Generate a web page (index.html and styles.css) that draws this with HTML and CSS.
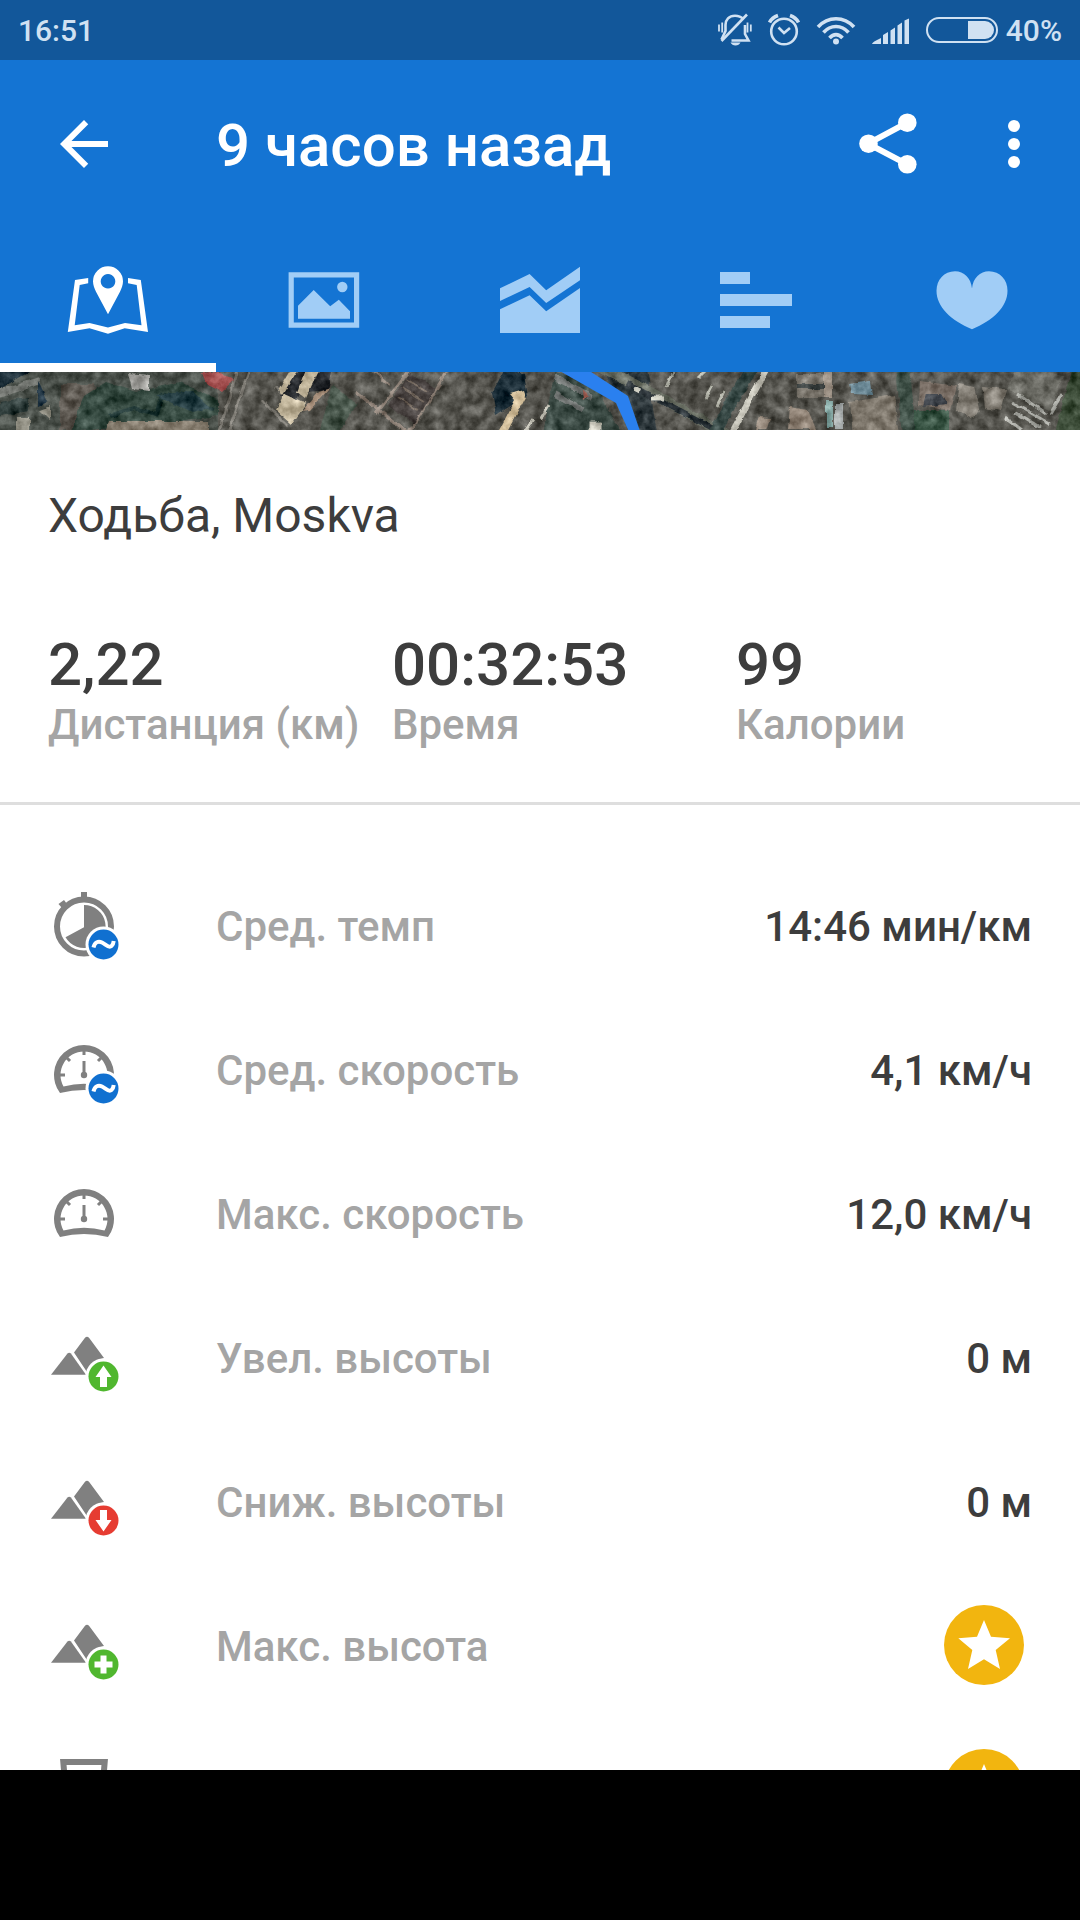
FILE: index.html
```html
<!DOCTYPE html>
<html lang="ru">
<head>
<meta charset="utf-8">
<meta name="viewport" content="width=device-width, initial-scale=1">
<title>9 часов назад</title>
<link rel="stylesheet" href="styles.css">
</head>
<body>
<svg class="defs" aria-hidden="true">
  <defs>
    <g id="badge-average">
      <circle cx="55.5" cy="54.5" r="18" fill="#fff"/>
      <circle cx="55.5" cy="54.5" r="15" fill="#1070d0"/>
      <path d="M45.500 57.500c1-5 4.500-7 8.500-5s6.500 6 9.500 3.500c1.500-1.300 2-3 2.200-5" fill="none" stroke="#fff" stroke-width="4"/>
    </g>
    <g id="gauge">
      <path fill-rule="evenodd" d="M12 59A30 30 0 1 1 60 59Q36 53 12 59zM15.500 52.500Q36 47 56.500 52.500A23.500 23.500 0 1 0 15.500 52.500z"/>
      <path d="M36 15v6M12 41h5M60 41h-5M17.500 22.500l4.500 4.500M54.500 22.500L50 27M36 27v14" fill="none" stroke="#808080" stroke-width="3"/>
      <circle cx="36" cy="41" r="3.200"/>
    </g>
    <g id="mountains">
      <path d="M26 30.500L37 15.700q2-2 4 0L56 36Q43 38 39 50z"/>
      <path d="M3 52.700L19.500 31.600q1.700-1.600 3.400 0L38 52.700z"/>
      <circle cx="55.500" cy="54.500" r="18" fill="#fff"/>
    </g>
    <g id="star">
      <circle cx="40" cy="40" r="40" fill="#f2b50f"/>
      <path d="M40 15L47 31.700 66 33.300 51.700 45 56 64 40 54.300 24 64 28.300 45 14.300 33.300 33 31.700z" fill="#fff"/>
    </g>
  </defs>
</svg>

<div class="statusbar">
  <span class="statusbar-text">16:51</span>
  <div class="statusbar-icons">
    <svg width="34" height="34" viewBox="0 0 34 34" fill="none" stroke="currentColor">
      <path d="M25 6C22.500 3 20 2.700 17 2.700c-6 0-9.500 4-9.500 9.300v6L3.500 26.500M13.500 27.500H30.500L27 21V12" stroke-width="2.600"/>
      <path d="M29 1.500L3.500 28" stroke-width="2.600"/>
      <path d="M1 11.500v7M4.200 9.500v10M29.500 9.500v10M32.800 11.500v7" stroke-width="1.800"/>
      <path d="M12.500 29.500h10q-1.500 3-5 3t-5-3z" fill="currentColor" stroke="none"/>
    </svg>
    <svg width="32" height="34" viewBox="0 0 32 34" fill="none" stroke="currentColor" stroke-width="2.600">
      <circle cx="16" cy="18.500" r="12.800"/>
      <path d="M10.500 14.500L16 20l6-5"/>
      <path d="M1.500 9.500Q4 4.500 10 2.500M30.500 9.500Q28 4.500 22 2.500" stroke-width="3.600"/>
    </svg>
    <svg width="40" height="34" viewBox="0 0 40 34" fill="none" stroke="currentColor" stroke-width="3.600">
      <path d="M2 14C12 3 28 3 38 14M7.500 19.500c7-8 18-8 25 0M13.500 25c4-4.500 9-4.500 13 0"/>
      <circle cx="20" cy="28.500" r="3" fill="currentColor" stroke="none"/>
    </svg>
    <svg width="38" height="34" viewBox="0 0 38 34" fill="currentColor">
      <path d="M0 31q0-2 9-6v6zM11 31V22l5-3v12zM18.500 31V17.500l4.500-3V31zM25.500 31V12.500l4.500-3V31zM32.500 31V7.500L37 5.500V31z"/>
    </svg>
    <svg width="72" height="34" viewBox="0 0 72 34">
      <rect x="1" y="5" width="70" height="24" rx="12" fill="none" stroke="currentColor" stroke-width="2"/>
      <path d="M42 8H59a9 9 0 0 1 0 18H42z" fill="currentColor"/>
    </svg>
  </div>
  <span class="statusbar-text">40%</span>
</div>

<header class="header">
  <div class="appbar">
    <button class="icon-button" type="button" aria-label="Назад">
      <svg width="72" height="72" viewBox="0 0 24 24" fill="currentColor"><path d="M20 11H7.830l5.590-5.590L12 4l-8 8 8 8 1.410-1.410L7.830 13H20v-2z"/></svg>
    </button>
    <h1 class="title">9 часов назад</h1>
    <div class="actions">
      <button class="icon-button" type="button" aria-label="Поделиться">
        <svg width="72" height="72" viewBox="0 0 72 72" fill="currentColor">
          <path d="M55.300 14.700L16 35.700l39.300 20.600" fill="none" stroke="currentColor" stroke-width="6"/>
          <circle cx="16.500" cy="35.700" r="9.300"/><circle cx="55.300" cy="14.700" r="9.300"/><circle cx="55.300" cy="56.300" r="9.300"/>
        </svg>
      </button>
      <button class="icon-button" type="button" aria-label="Ещё">
        <svg width="72" height="72" viewBox="0 0 72 72" fill="currentColor"><circle cx="36" cy="18" r="6"/><circle cx="36" cy="36" r="6"/><circle cx="36" cy="54" r="6"/></svg>
      </button>
    </div>
  </div>
  <nav class="tabs" role="tablist">
    <button class="tab tab-active" type="button" role="tab" aria-selected="true" aria-label="Карта">
      <svg width="96" height="96" viewBox="0 0 96 96" fill="currentColor">
        <path d="M15 28L28.200 26V31.300L19.700 33 14.700 73.300 29.500 71 48 75.500 65 71 81.500 73.300 76.700 33 68 31.300V26L80.800 28 88 80 64.700 76.300 48 81.700 29.500 76.300 7.800 80z"/>
        <path fill-rule="evenodd" d="M48 14.300a15 15 0 0 1 15 15c0 4-1.500 7-3 10.500L48 62.300 36 39.800c-1.500-3.500-3-6.500-3-10.500a15 15 0 0 1 15-15zM48 22a7.300 7.300 0 1 0 .010 0z"/>
      </svg>
    </button>
    <button class="tab" type="button" role="tab" aria-selected="false" aria-label="Фото">
      <svg width="96" height="96" viewBox="0 0 96 96" fill="currentColor">
        <path fill-rule="evenodd" d="M12.600 20.300H83.200V75.700H12.600zM17.800 25.500V70.500H78V25.500z"/>
        <path d="M22 53.700L37.700 38 54.200 54.300 62.800 47.700 74 59.300V66.700H22z"/><circle cx="66.300" cy="35" r="5.200"/>
      </svg>
    </button>
    <button class="tab" type="button" role="tab" aria-selected="false" aria-label="График">
      <svg width="96" height="96" viewBox="0 0 96 96" fill="currentColor">
        <path d="M8 36.300L37.600 22 54.200 38.300 88 14.700V28.300L54.200 51 37.600 35 8 49z"/>
        <path d="M8 57.300L37.600 43.300 54.200 59.300 88 36V81H8z"/>
      </svg>
    </button>
    <button class="tab" type="button" role="tab" aria-selected="false" aria-label="Круги">
      <svg width="96" height="96" viewBox="0 0 96 96" fill="currentColor"><path d="M12 20H42V32H12zM12 42H84V54H12zM12 64H62V76H12z"/></svg>
    </button>
    <button class="tab" type="button" role="tab" aria-selected="false" aria-label="Пульс">
      <svg width="96" height="96" viewBox="0 0 96 96" fill="currentColor"><path d="M48 36.500C49 26 56 19.300 65 19.300c11 0 18.500 8.500 18.500 19.500C83.500 55 69 68.500 48 77.300 27 68.500 12.500 55 12.500 38.800c0-11 7.500-19.500 18.500-19.500C40 19.300 47 26 48 36.500z"/></svg>
    </button>
  </nav>
</header>

<main class="content">
  <svg class="map" viewBox="0 0 1080 58" preserveAspectRatio="xMidYMid slice" role="img" aria-label="Карта маршрута">
    <defs>
      <filter id="ground" x="0" y="0" width="100%" height="100%" color-interpolation-filters="sRGB">
        <feTurbulence type="fractalNoise" baseFrequency="0.09" numOctaves="4" seed="8" result="noise"/>
        <feDisplacementMap in="SourceGraphic" in2="noise" scale="5" xChannelSelector="R" yChannelSelector="G" result="shape"/>
        <feGaussianBlur in="shape" stdDeviation="0.7" result="soft"/>
        <feColorMatrix in="noise" type="matrix" values="1 .3 0 0 -.150  1 .3 0 0 -.150  1 .3 0 0 -.150  0 0 0 0 1" result="grain"/>
        <feComposite in="soft" in2="grain" operator="arithmetic" k1="0" k2="1" k3=".45" k4="-.225"/>
      </filter>
    </defs>
    <g filter="url(#ground)">
      <rect x="-20" y="-20" width="1120" height="98" fill="#56554f"/>
      <path d="M-10-10H218V68H-10z" fill="#4d534d"/>
      <path d="M60 12h34l8 46H60z" fill="#5b564f"/>
      <path d="M84 24L106 10 136 20 180 10 218 28V44L150 52 70 60z" fill="#34483f"/>
      <path d="M110 44l24-8 22 6 6-20 52 16" fill="none" stroke="#1f3634" stroke-width="4"/>
      <path d="M-10-10H46L0 17z" fill="#142630"/>
      <path d="M0 17L40 5V12L0 26z" fill="#777a75"/>
      <path d="M38 8l10 22-10 4z" fill="#1c303e"/>
      <path d="M0 30l28-5v14L0 44z" fill="#33413f"/>
      <path d="M128 1l22 2 0 16-18-2z" fill="#a5a4a0"/>
      <path d="M108 49h100v12H104z" fill="#82796b"/>
      <path d="M16 46l14 0v14H16zM40 38l10-4v14z" fill="#918f83"/>
      <path d="M202 1l16-2 16 9-12 11-16-8z" fill="#a04d4d"/>
      <path d="M156 23l36-4 20 18-20 4z" fill="#253d42"/>
      <path d="M238-5l-20 68M250-5L228 63M262 28l26 26M275 15l20 20" stroke="#817e77" stroke-width="3"/>
      <path d="M292 0l-12 24 16 6 14-30zM316 0h16l-4 18-20 2z" fill="#24272b"/>
      <path d="M300-5l-18 28-4-4 14-24zM306-4L297 20 305 26 320-4zM284 22l18 8 4 2-14 20-16-14z" fill="#c2b69c"/>
      <path d="M318 20l12-4-20 22-8 1z" fill="#a58e7a"/>
      <path d="M332 12l25 20-20 30h-18z" fill="#48564b"/>
      <path d="M356 20l56 44M372-3l17 16M410-2l-34 44M448-2L408 62" stroke="#8b7f75" stroke-width="3"/>
      <path d="M410 1l26 15-22 36-26-19z" fill="#494341"/>
      <path d="M406 7l22 13M402 16l22 13M397 25l21 13" stroke="#74695f" stroke-width="2"/>
      <path d="M506-5l18 8 4 20-32 20-4-22z" fill="#182a34"/>
      <path d="M510 22l14-4 2 6L505 64h-9l19-36z" fill="#d1bd99"/>
      <path d="M555 0l40 12 26 50h-78l6-34z" fill="#3b4a44"/>
      <path d="M554 5l38 20M555 22l28 16" stroke="#6f7371" stroke-width="6"/>
      <path d="M582 18l6 5-5 5" fill="#a5675c"/>
      <path d="M540 48l9-15M525 60l8-12M591 51h9v10h-9z" stroke="#bebcb0" stroke-width="3" fill="#bebcb0"/>
      <path d="M600-10h46l12 78h-24z" fill="#343e42"/>
      <path d="M600-5l40 20 22 12 75 41" fill="none" stroke="#666b60" stroke-width="11"/>
      <path d="M628 12l112 58" stroke="#272f34" stroke-width="6"/>
      <path d="M634 16l6 3M652 26h12" stroke="#ccccc0" stroke-width="5"/>
      <path d="M674-4l-8 20M705 0l-6 6M712 14l-7 14M724 20l-7 14" stroke="#b4b5aa" stroke-width="3"/>
      <path d="M752-5L714 62" stroke="#354643" stroke-width="12"/>
      <path d="M768-6L730 64" stroke="#c7c5ba" stroke-width="6"/>
      <path d="M796 2h28v24h-28z" fill="#777269"/><path d="M796 12h28v5h-28z" fill="#3f4544"/>
      <path d="M824-3h8v29h-8z" fill="#998e82"/>
      <path d="M790 35l18 3 8 19h-28zM760 45l10 1-4 12h-10z" fill="#8c7f72"/>
      <path d="M826 29h7v26h-7z" fill="#83a5a1"/><path d="M835 31h8v26h-8z" fill="#a1a6a6"/>
      <path d="M850 12l20-3 2 14-20-1z" fill="#728f9c"/>
      <path d="M850 30l44-7 5 42h-46z" fill="#7d766b"/>
      <path d="M896-5h14l6 70h-14z" fill="#3f5047"/>
      <path d="M920 9l37 5-6 24-32-5z" fill="#7b7067"/><path d="M926 22l15 0 6 10-24 3z" fill="#40454c"/>
      <path d="M914 38h36v26h-36z" fill="#385343"/>
      <path d="M960 12l14 3 6 26-10 4-14-7zM982 15l24 2-6 22-16-3z" fill="#827d74"/>
      <path d="M1018-5l45 8-12 36-44-23z" fill="#686861"/>
      <path d="M1012 30l38 22M1014 40l26 16M1006 46l16 12M1018 22l28 20M1062 22l-12 20" stroke="#aaaba5" stroke-width="3"/>
      <path d="M1072-5h18v70h-36z" fill="#3f4f3b"/>
    </g>
    <path d="M558-2L616 31 630 62H641L628 24 588-2z" fill="#2a80ef"/>
  </svg>

  <section class="summary">
    <h2 class="activity">Ходьба, Moskva</h2>
    <dl class="stats">
      <div class="stat"><dt>Дистанция (км)</dt><dd>2,22</dd></div>
      <div class="stat"><dt>Время</dt><dd>00:32:53</dd></div>
      <div class="stat"><dt>Калории</dt><dd>99</dd></div>
    </dl>
  </section>

  <ul class="details">
    <li class="row">
      <svg class="row-icon" viewBox="0 0 72 72">
        <circle cx="36" cy="36.500" r="27" fill="none" stroke="#808080" stroke-width="6"/>
        <path d="M36 15A21.500 21.500 0 1 1 17.500 47.300L36 37.300zM33 2h6v7h-6zM10.500 14l5.500-4 3 4-5 4z"/>
        <use href="#badge-average"/>
      </svg>
      <span class="label">Сред. темп</span><span class="value">14:46 мин/км</span>
    </li>
    <li class="row">
      <svg class="row-icon" viewBox="0 0 72 72"><use href="#gauge"/><use href="#badge-average"/></svg>
      <span class="label">Сред. скорость</span><span class="value">4,1 км/ч</span>
    </li>
    <li class="row">
      <svg class="row-icon" viewBox="0 0 72 72"><use href="#gauge"/></svg>
      <span class="label">Макс. скорость</span><span class="value">12,0 км/ч</span>
    </li>
    <li class="row">
      <svg class="row-icon" viewBox="0 0 72 72"><use href="#mountains"/><circle cx="55.500" cy="54.500" r="15" fill="#50b72f"/><path d="M55.500 43.500l8 11.500h-4.500v10h-7V55h-4.500z" fill="#fff"/></svg>
      <span class="label">Увел. высоты</span><span class="value">0 м</span>
    </li>
    <li class="row">
      <svg class="row-icon" viewBox="0 0 72 72"><use href="#mountains"/><circle cx="55.500" cy="54.500" r="15" fill="#e63c32"/><path d="M55.500 65.500l8-11.500h-4.500V44h-7v10h-4.500z" fill="#fff"/></svg>
      <span class="label">Сниж. высоты</span><span class="value">0 м</span>
    </li>
    <li class="row">
      <svg class="row-icon" viewBox="0 0 72 72"><use href="#mountains"/><circle cx="55.500" cy="54.500" r="15" fill="#50b72f"/><path d="M52.500 45.500h6v6h6v6h-6v6h-6v-6h-6v-6h6z" fill="#fff"/></svg>
      <span class="label">Макс. высота</span>
      <svg class="premium" viewBox="0 0 80 80"><use href="#star"/></svg>
    </li>
    <li class="row">
      <svg class="row-icon" viewBox="0 0 72 72"><path d="M15.300 8H56.700L52 64H20z" fill="none" stroke="#808080" stroke-width="6"/></svg>
      <span class="label"></span>
      <svg class="premium" viewBox="0 0 80 80"><use href="#star"/></svg>
    </li>
  </ul>
</main>
<footer class="bottom-bar"></footer>
</body>
</html>
```
FILE: styles.css
```css
* {
  box-sizing: border-box;
}

body {
  margin: 0;
  height: 100vh;
  display: flex;
  flex-direction: column;
  overflow: hidden;
  background: #fff;
  color: #3d3d3d;
  font-family: Roboto, "Noto Sans", sans-serif;
  font-size: 42px;
  font-weight: 500;
  line-height: 48px;
}

h1, h2, dl, dd, ul {
  margin: 0;
  padding: 0;
}

button {
  display: flex;
  align-items: center;
  justify-content: center;
  padding: 0;
  border: 0;
  background: none;
  color: inherit;
}

svg {
  display: block;
  flex: none;
}

.defs {
  position: absolute;
  width: 0;
  height: 0;
}

.statusbar {
  display: flex;
  flex: none;
  align-items: center;
  gap: 8px;
  height: 60px;
  padding: 0 18px;
  background: #12579a;
  color: #d0e1f2;
}

.statusbar-text {
  padding-top: 2px;
  font-size: 30px;
  font-weight: 500;
  line-height: 36px;
}

.statusbar-icons {
  display: flex;
  gap: 16px;
  margin-left: auto;
}

.header {
  flex: none;
  background: #1474d3;
  color: #fff;
}

.appbar {
  display: flex;
  align-items: center;
  height: 168px;
  padding: 0 30px 0 48px;
}

.title {
  flex: 1;
  padding: 4px 0 0 96px;
  font-size: 60px;
  font-weight: 500;
  line-height: 72px;
}

.actions {
  display: flex;
  gap: 54px;
}

.tabs {
  display: grid;
  grid-template-columns: repeat(5, 1fr);
  height: 144px;
}

.tab {
  border-top: 9px solid transparent;
  border-bottom: 9px solid transparent;
  color: #a1cdf6;
}

.tab-active {
  border-bottom-color: #fff;
  color: #fff;
}

.content {
  flex: 1;
  min-height: 0;
  overflow: hidden;
}

.map {
  width: 100%;
  height: 58px;
}

.summary {
  padding: 58px 0 53px 48px;
  border-bottom: 3px solid #dedede;
}

.activity {
  font-size: 48px;
  font-weight: 400;
  line-height: 56px;
}

.stats {
  display: grid;
  grid-template-columns: repeat(3, 1fr);
  margin-top: 85px;
}

.stat {
  display: flex;
  flex-direction: column-reverse;
  white-space: nowrap;
}

.stat dt {
  color: #a5a5a5;
}

.stat dd {
  font-size: 60px;
  line-height: 72px;
}

.details {
  padding: 49px 48px 0;
  list-style: none;
}

.row {
  display: flex;
  align-items: center;
  height: 144px;
}

.row-icon {
  width: 72px;
  height: 72px;
  fill: #808080;
}

.label,
.value {
  padding-top: 2px;
}

.label {
  flex: 1;
  padding-left: 96px;
  color: #a5a5a5;
}

.premium {
  width: 80px;
  height: 80px;
  margin: 0 8px 2px 0;
}

.bottom-bar {
  flex: none;
  height: 150px;
  background: #000;
}
```
